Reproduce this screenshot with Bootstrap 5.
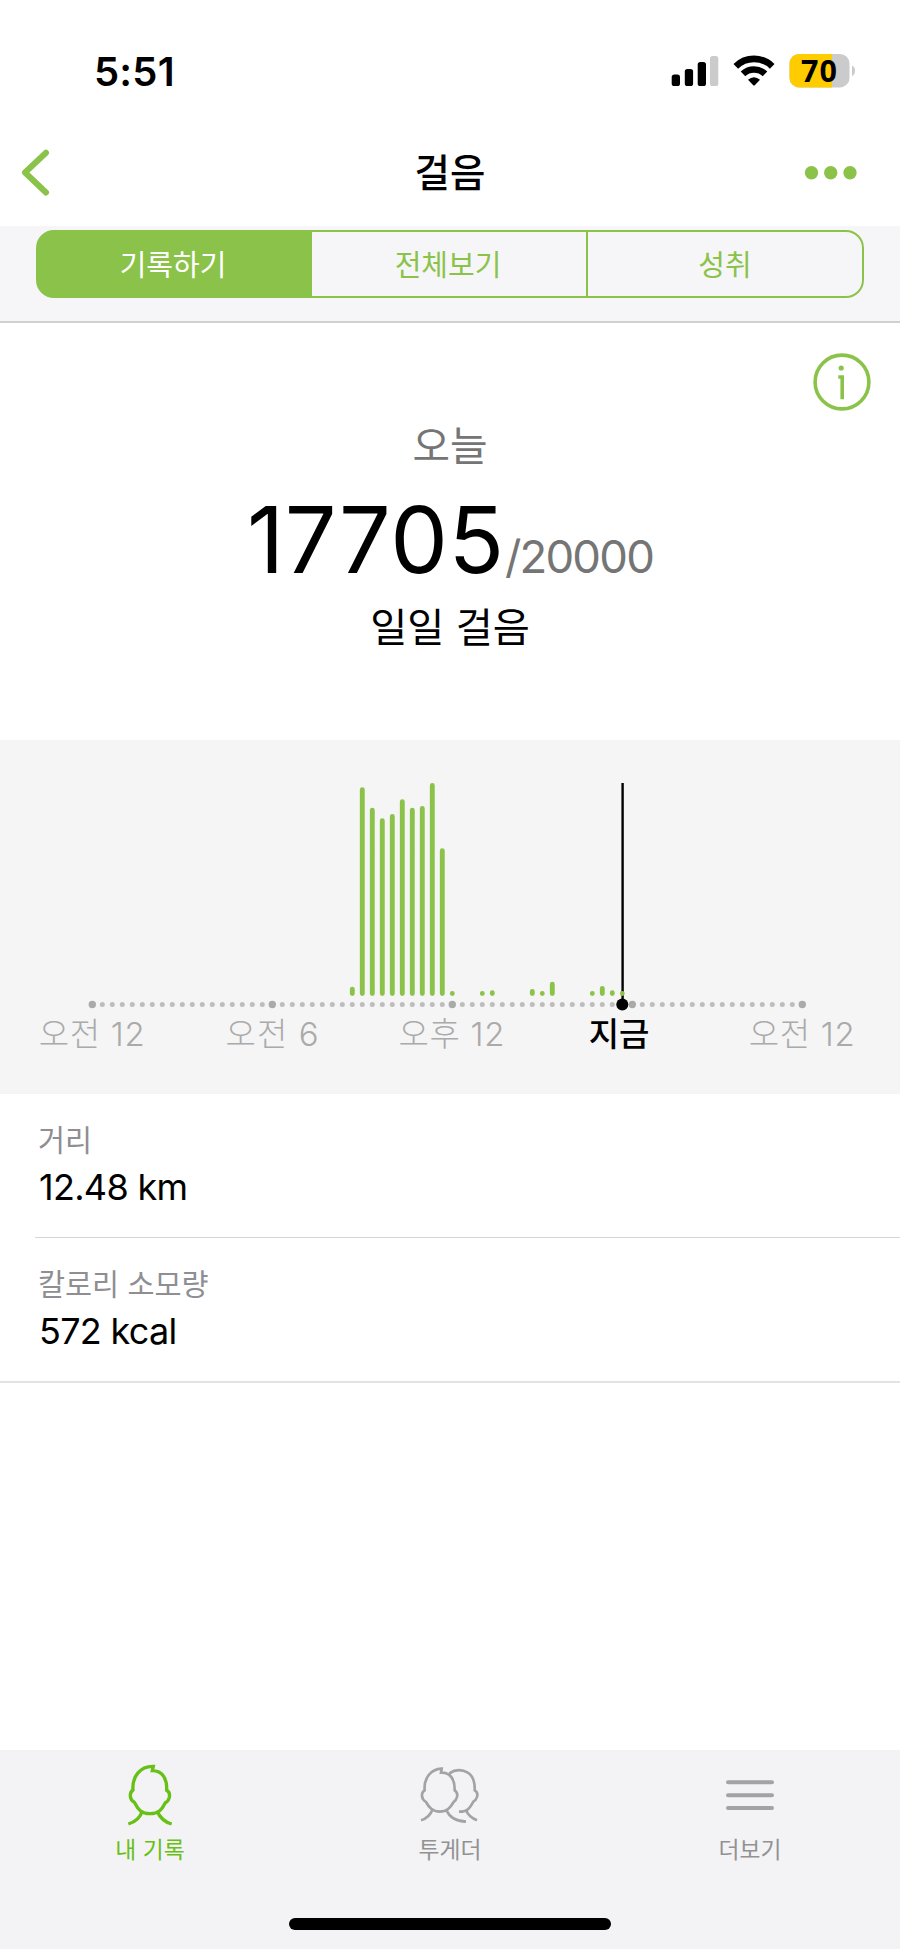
<!DOCTYPE html>
<html lang="ko">
<head>
<meta charset="utf-8">
<meta name="viewport" content="width=device-width, initial-scale=1">
<title>걸음</title>
<link href="https://cdn.jsdelivr.net/npm/bootstrap@5.3.0/dist/css/bootstrap.min.css" rel="stylesheet">
<style>
:root{--leaf:#8bc34a;--ui:Inter,"Noto Sans CJK KR",sans-serif}
body{font-family:var(--ui);color:#000;background:#fff;line-height:1}
svg{display:block}
.screen{width:900px;height:1949px;overflow:hidden}
.status-bar{height:112px;padding:30px 45px 0 94px}
.clock{font-size:40px;font-weight:600;line-height:84px;letter-spacing:.2px}
.title-bar{height:114px;padding:6px 42px 0 21px}
.title-text{font-size:38.5px;font-weight:500;line-height:111px;padding-left:21px}
.segments{height:97px;background:#f6f6f8;border-bottom:2px solid #d0d0d2;padding:4px 36px 0}
.segments .btn-group{height:68px}
.segments .btn{--bs-btn-color:var(--leaf);--bs-btn-border-color:var(--leaf);--bs-btn-active-bg:var(--leaf);--bs-btn-active-border-color:var(--leaf);--bs-btn-active-color:#fff;--bs-btn-border-width:2px;--bs-btn-border-radius:18px;--bs-btn-font-size:29px;flex:none;width:276px;padding:2px 2px 0 0;line-height:64px;font-family:var(--ui)}
.segments .btn-group>.btn:not(:first-child){margin-left:0;border-left:0}
.segments .btn-group>.btn:last-child{padding-right:0}
.hero{height:417px;padding-top:30px}
.hero-info{height:58px;padding-right:29px}
.today{font-size:40.8px;color:#757575;line-height:60px;margin-top:5px}
.steps{height:100px;margin-top:14px}
.steps-now{font-size:91.5px;line-height:100px;letter-spacing:.7px}
.steps-goal{font-size:45.5px;color:#757575;letter-spacing:-1.8px}
.caption-line{font-size:40.3px;line-height:60px;margin-top:8px}
.chart-band{height:354px;background:#f5f5f5}
.stat{height:144px;border:0;border-radius:0;padding:27px 4px 0;color:#000}
.stat:first-child{height:143px}
.stat+.stat{border-top:1px solid #d5d5d7!important}
.stats{margin-left:35px}
.stat-name{font-size:29.4px;color:#8e8e93;line-height:40px;margin-left:-1px}
.stat-value{font-size:36px;line-height:52px;letter-spacing:-.7px}
.tab-strip{height:199px;background:#f3f3f5;padding-top:12px}
.tab-strip .nav-link{color:#929292;padding:0;font-size:22.8px;line-height:39px}
.tab-strip .nav-link.active{color:#67c015}
.home-bar{width:322px;height:12px;border-radius:6px;background:#000;margin-bottom:19px}
</style>
</head>
<body>
<div class="screen d-flex flex-column">
  <header class="status-bar d-flex justify-content-between">
    <div class="clock">5:51</div>
    <svg width="184" height="84" viewBox="671 30 184 84">
      <rect x="671.7" y="74.5" width="8.3" height="11.5" rx="2.6"/><rect x="684.8" y="69" width="8.3" height="17" rx="2.6"/><rect x="697.7" y="62" width="8.3" height="24" rx="2.6"/><rect x="710" y="56" width="8.3" height="30" rx="2.6" fill="#cbcbcb"/>
      <g fill="none" stroke="#000" stroke-width="6.6"><path d="M735.8 66.3a26 26 0 0 1 36.4 0"/><path d="M743 73.9a16 16 0 0 1 22 0"/></g>
      <path d="M748 79.7q6-5 12 0l-5 5.2q-1 1-2 0z"/>
      <clipPath id="cell"><rect x="789.5" y="54" width="60" height="33.4" rx="9.5"/></clipPath>
      <g clip-path="url(#cell)"><path fill="#cbcbcb" d="M789 54h61v34h-61z"/><path fill="#ffcc00" d="M789 54h43v34h-43z"/></g>
      <path fill="#cbcbcb" d="M852 65.5q3 1.5 3 5.3t-3 5.3z"/>
      <text x="819" y="81.6" text-anchor="middle" font-family="Open Sans" font-size="30.5" font-weight="700" textLength="36">70</text>
    </svg>
  </header>
  <nav class="title-bar row g-0 align-items-start" aria-label="제목">
    <div class="col"><svg width="30" height="108" viewBox="21 118 30 108" fill="none" stroke="#8bc34a" stroke-width="6" stroke-linecap="round" stroke-linejoin="round"><path d="M46 152.7L25 172.5l21 20"/></svg></div>
    <div class="col-auto title-text">걸음</div>
    <div class="col d-flex justify-content-end"><svg width="54" height="108" viewBox="804 118 54 108" fill="#8bc34a"><circle cx="811.5" cy="172.7" r="6.7"/><circle cx="830.7" cy="172.7" r="6.7"/><circle cx="850" cy="172.7" r="6.7"/></svg></div>
  </nav>
  <div class="segments">
    <div class="btn-group d-flex" role="group">
      <button class="btn active" type="button">기록하기</button>
      <button class="btn" type="button">전체보기</button>
      <button class="btn" type="button">성취</button>
    </div>
  </div>
  <main class="flex-grow-1">
    <section class="hero text-center">
      <div class="hero-info d-flex justify-content-end"><svg width="58" height="58" fill="none" stroke="#8bc34a" stroke-width="3.6"><circle cx="29" cy="29" r="26.9"/><path d="M25.3 24h3.9v22.2"/><circle cx="28.2" cy="15" r="2.6" fill="#8bc34a" stroke="none"/></svg></div>
      <div class="today">오늘</div>
      <div class="steps"><span class="steps-now">17705</span><span class="steps-goal">/20000</span></div>
      <div class="caption-line">일일 걸음</div>
    </section>
    <section class="chart-band">
      <svg width="900" height="354" viewBox="0 740 900 354">
        <path d="M622.6 783v221" stroke="#000" stroke-width="2.4"/>
        <g stroke="#8bc34a" stroke-width="4.9" stroke-linecap="round">
          <path d="M352.3 989.2v4.3M362.3 789.8v203.7M372.3 810.2v183.3M382.3 820.8v172.7M392.3 816.5v177M402.3 801.8v191.7M412.3 810.2v183.3M422.3 808.5v185M432.3 785.5v208M442.3 850.7v142.8M452.3 993.5v.1M482.3 993.5v.1M492.3 992.8v.7M532.3 991.4v2.1M542.3 993.5v.1M552.3 984.2v9.3M592.3 993.5v.1M602.3 988.5v5M612.3 992.8v.7M622.3 993.5v.1"/>
        </g>
        <path d="M102.3 1004.5h691" stroke="#bdbdbd" stroke-width="5" stroke-linecap="round" stroke-dasharray="0 10"/>
        <g fill="#aaa"><circle cx="92.3" cy="1004.5" r="3.7"/><circle cx="272.3" cy="1004.5" r="3.7"/><circle cx="452.3" cy="1004.5" r="3.7"/><circle cx="632.3" cy="1004.5" r="3.7"/><circle cx="802.3" cy="1004.5" r="3.7"/></g>
        <circle cx="622.3" cy="1004.5" r="6"/>
        <g font-size="33" font-weight="300" fill="#aaa" text-anchor="middle">
          <text x="91.7" y="1045.5" textLength="106">오전 12</text><text x="272" y="1045.5" textLength="93">오전 6</text><text x="451.5" y="1045.5" textLength="106">오후 12</text><text x="801.7" y="1045.5" textLength="106">오전 12</text>
          <text x="619" y="1045.5" fill="#000" font-weight="500">지금</text>
        </g>
      </svg>
    </section>
    <section class="stats list-group list-group-flush">
      <div class="stat list-group-item"><div class="stat-name">거리</div><div class="stat-value">12.48 km</div></div>
      <div class="stat list-group-item"><div class="stat-name">칼로리 소모량</div><div class="stat-value">572 kcal</div></div>
    </section>
    <hr class="m-0 border-2 opacity-100" style="color:#e3e3e5">
  </main>
  <footer class="tab-strip d-flex flex-column">
    <nav class="nav nav-justified">
      <a class="nav-link active"><svg class="mx-auto" width="60" height="68" viewBox="60 66 180 204" fill="none" stroke="#67c015" stroke-width="10"><path d="M99 150C96 111 120 78 160 79L157 92C188 92 202 118 200 151Q211 157 208 172Q205 184 196 188C186 208 176 221 150 221S114 208 104 188Q92 181 91 169Q90 156 99 150ZM127 213Q118 242 85 252M171 213Q184 243 215 252"/></svg>내 기록</a>
      <a class="nav-link"><svg class="mx-auto" width="64" height="68" viewBox="84 66 192 204" fill="none" stroke="#a3a3a3" stroke-width="8"><path d="M104 151C101 116 121 87 155 86L153 98C183 97 195 121 194 151Q204 157 201 171Q198 182 191 186C181 203 171 215 149 215S117 202 108 186Q96 178 96 167Q95 156 104 151ZM128 208Q118 234 93 241M169 210Q183 243 228 245M178 100C204 82 240 91 250 119Q255 134 254 151Q265 157 261 171Q258 181 250 185C240 204 232 216 207 215M228 211Q237 232 261 241"/></svg>투게더</a>
      <a class="nav-link"><svg class="mx-auto" width="60" height="68" viewBox="90 66 180 204" stroke="#a3a3a3" stroke-width="12" stroke-linecap="round"><path d="M114 127h132M114 166h132M114 204h132"/></svg>더보기</a>
    </nav>
    <div class="home-bar mx-auto mt-auto flex-shrink-0"></div>
  </footer>
</div>
<script src="https://cdn.jsdelivr.net/npm/bootstrap@5.3.0/dist/js/bootstrap.bundle.min.js"></script>
</body>
</html>
